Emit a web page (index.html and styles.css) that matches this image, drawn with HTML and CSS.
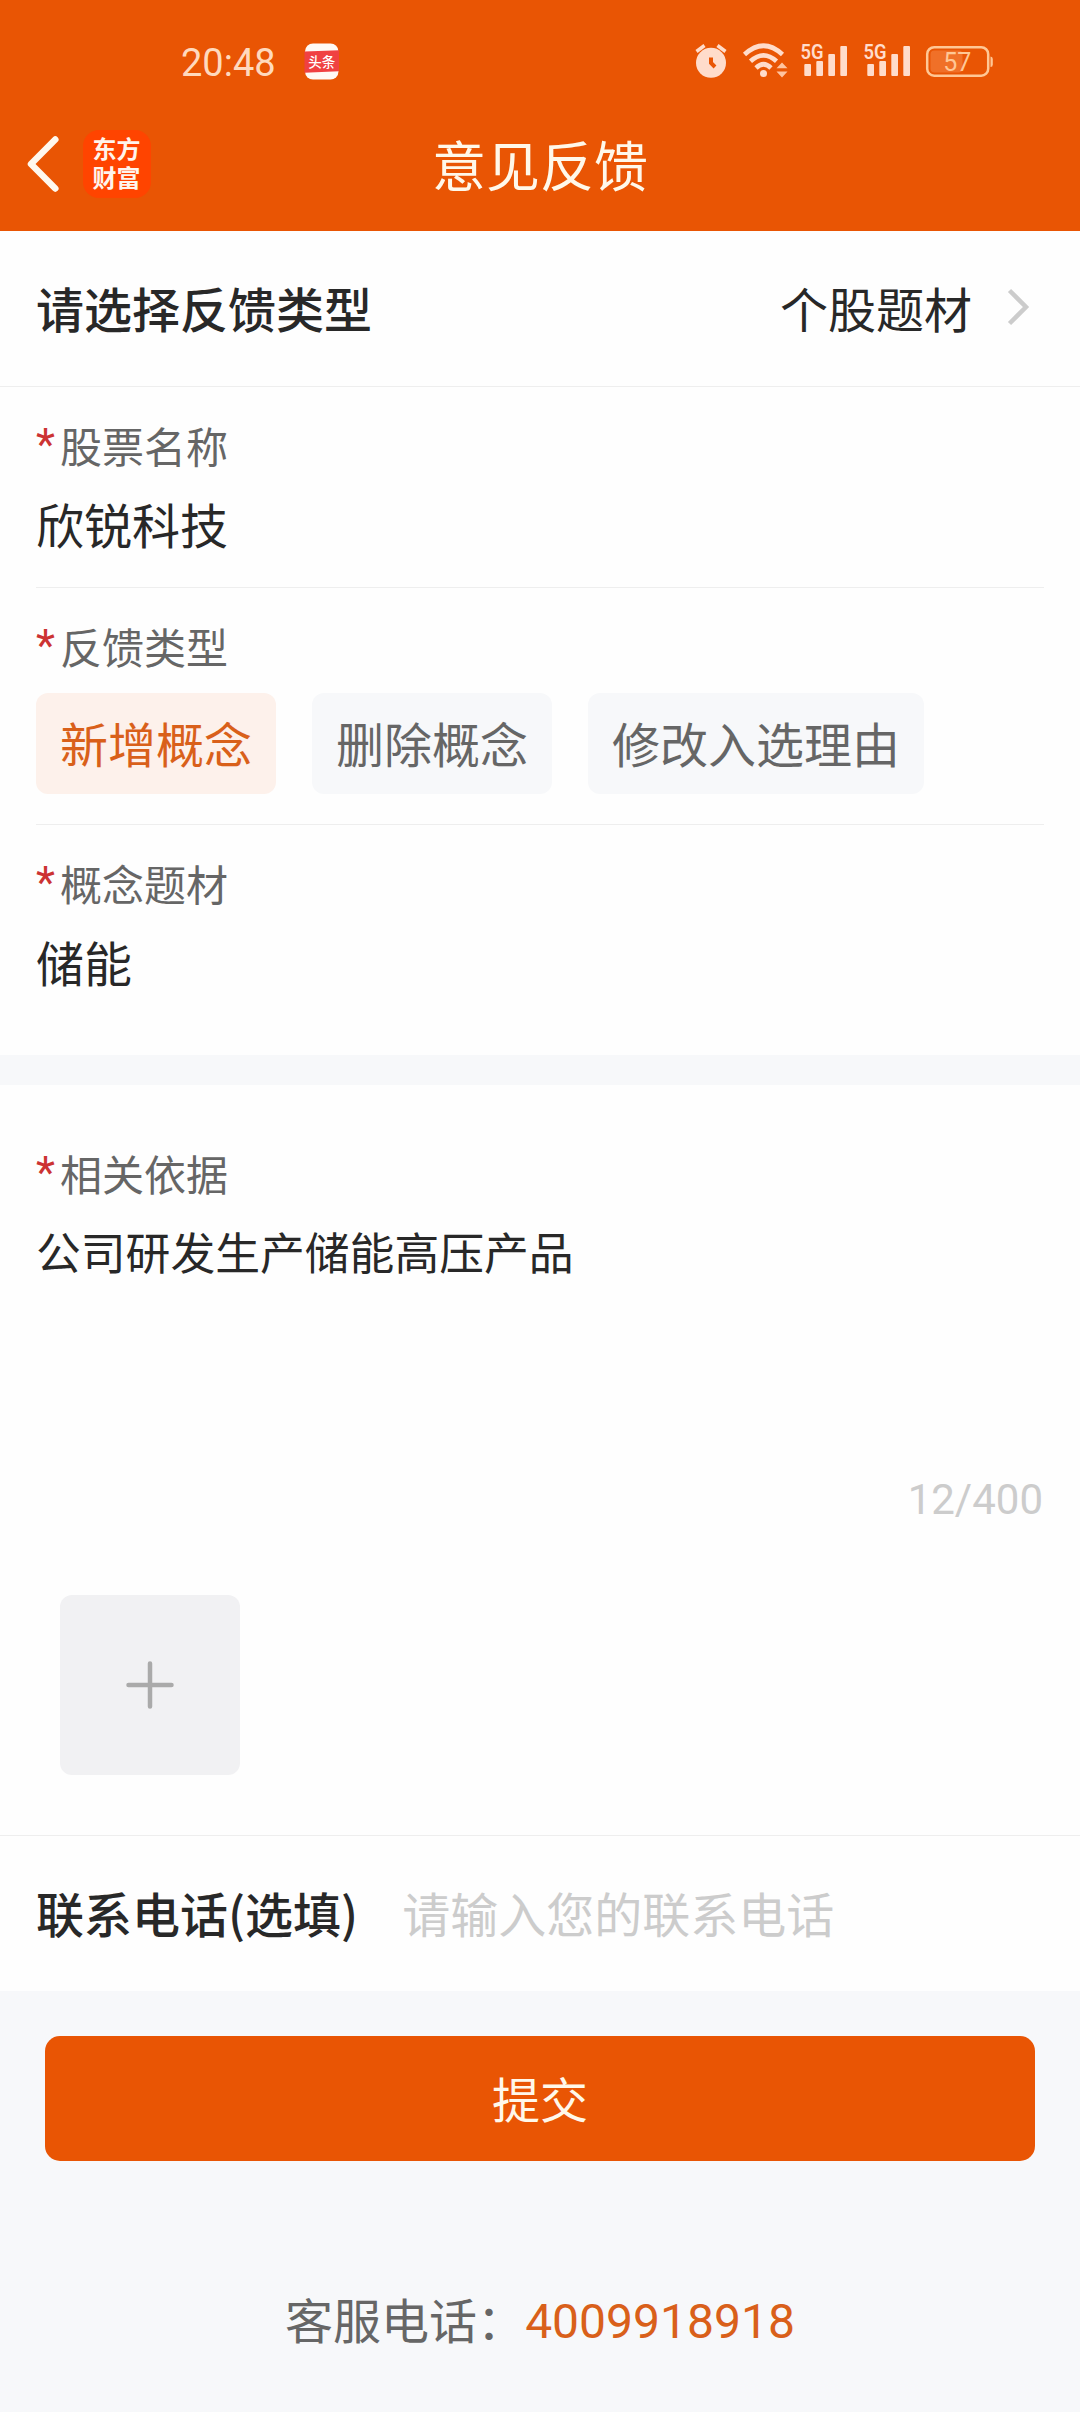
FILE: index.html
```html
<!DOCTYPE html>
<html lang="zh-CN">
<head>
<meta charset="utf-8">
<title>意见反馈</title>
<link rel="stylesheet" href="styles.css">
</head>
<body>
<div class="page">
  <header class="header">
    <div class="status">
      <div class="status-left">
        <span class="time">20:48</span>
        <svg class="news" width="36" height="37" viewBox="0 0 36 37">
          <rect x="1" y="0.5" width="33.5" height="36" rx="8" fill="#fffaf5"/>
          <path d="M0.5 8.5 35 7.3V28.2L0.5 29.8Z" fill="#f04142"/>
          <text x="17.7" y="23.600" text-anchor="middle" class="news-text">头条</text>
        </svg>
      </div>
      <svg class="status-icons" width="305" height="50" viewBox="692 32 305 50">
        <g fill="#ffdccb">
          <circle cx="711" cy="62.8" r="15"/>
          <path d="M696.500 51.500 704.500 45.500M725.500 51.500 717.500 45.500" stroke="#ffdccb" stroke-width="3.500"/>
          <path d="M711 57.5V63L715 67" fill="none" stroke="#e95504" stroke-width="4"/>
        </g>
        <g fill="none" stroke="#ffdccb" stroke-width="4.6">
          <path d="M744.5 54.5Q763.5 37 782.5 54.5"/>
          <path d="M750.5 61.3Q763.5 49.5 776.5 61.3"/>
          <path d="M756 68Q763.5 60.5 771 68"/>
        </g>
        <circle cx="763.5" cy="73.5" r="3.5" fill="#ffdccb"/>
        <path d="M776.5 68.3 782 62.5 787.5 68.3ZM776.5 71.5H787.5L782 77.5Z" fill="#ffc4a0"/>
        <g fill="#ffdccb">
          <text x="800.5" y="59" class="net" textLength="23" lengthAdjust="spacingAndGlyphs">5G</text>
          <rect x="804.3" y="64" width="6.7" height="12" rx="1"/>
          <rect x="816.3" y="61" width="6.7" height="15" rx="1"/>
          <rect x="828.3" y="54" width="6.7" height="22" rx="1"/>
          <rect x="840.3" y="46" width="6.7" height="30" rx="1"/>
        </g>
        <g fill="#ffdccb">
          <text x="863.5" y="59" class="net" textLength="23" lengthAdjust="spacingAndGlyphs">5G</text>
          <rect x="867.3" y="64" width="6.7" height="12" rx="1"/>
          <rect x="879.3" y="61" width="6.7" height="15" rx="1"/>
          <rect x="891.3" y="54" width="6.7" height="22" rx="1"/>
          <rect x="903.3" y="46" width="6.7" height="30" rx="1"/>
        </g>
        <rect x="930.5" y="50.500" width="32" height="22" rx="4" fill="#f07028"/>
        <rect x="927.2" y="47.2" width="61" height="28.5" rx="7" fill="none" stroke="#ffc795" stroke-width="2.5"/>
        <path d="M990.5 56.5Q992.8 56.5 992.8 59V64.5Q992.8 67 990.5 67Z" fill="#ffc795"/>
        <text x="957.3" y="70.8" text-anchor="middle" class="battery">57</text>
      </svg>
    </div>
    <nav class="nav">
      <div class="nav-left">
        <svg width="34" height="58" viewBox="0 0 34 58">
          <path d="M29.3 4.5 5 29 29.3 53.5" fill="none" stroke="#fff8ee" stroke-width="6.5" stroke-linecap="round" stroke-linejoin="round"/>
        </svg>
        <div class="logo"><span>东方</span><span>财富</span></div>
      </div>
      <h1 class="title">意见反馈</h1>
    </nav>
  </header>

  <div class="type-row">
    <span class="strong">请选择反馈类型</span>
    <span class="type-value">个股题材
      <svg width="24" height="40" viewBox="0 0 24 40">
        <path d="M2.5 3.5 19 20 2.5 36.5" fill="none" stroke="#ccc" stroke-width="4.5"/>
      </svg>
    </span>
  </div>

  <section class="fields">
    <div class="field">
      <div class="label"><i>*</i>股票名称</div>
      <div class="value">欣锐科技</div>
    </div>
    <div class="field field-chips">
      <div class="label"><i>*</i>反馈类型</div>
      <div class="chips">
        <span class="chip chip-on">新增概念</span>
        <span class="chip">删除概念</span>
        <span class="chip">修改入选理由</span>
      </div>
    </div>
    <div class="field field-last">
      <div class="label"><i>*</i>概念题材</div>
      <div class="value">储能</div>
    </div>
  </section>

  <section class="evidence">
    <div class="label"><i>*</i>相关依据</div>
    <div class="evidence-text">公司研发生产储能高压产品</div>
    <div class="counter">12/400</div>
    <div class="upload">
      <svg width="50" height="50" viewBox="0 0 50 50">
        <path d="M25 3.5V46.5M3.5 25H46.5" stroke="#aaa" stroke-width="4.5" stroke-linecap="round"/>
      </svg>
    </div>
  </section>

  <div class="contact">
    <span class="strong">联系电话(选填)</span>
    <span class="placeholder">请输入您的联系电话</span>
  </div>

  <footer class="footer">
    <div class="submit">提交</div>
    <div class="service"><span class="service-label">客服电话：</span><span class="phone">4009918918</span></div>
  </footer>
</div>
</body>
</html>
```
FILE: styles.css
```css
* { box-sizing: border-box; }

body {
  margin: 0;
  background: #f7f8fa;
  color: #282828;
  font-family: "Noto Sans CJK SC", sans-serif;
  font-size: 48px;
  line-height: 66px;
}

svg { display: block; flex: none; }

.page { width: 1080px; height: 2412px; overflow: hidden; display: flex; flex-direction: column; }

/* Header */
.header { height: 231px; flex: none; background: #e95504; }
.status { height: 95px; padding: 32px 83px 0 181px; display: flex; justify-content: space-between; align-items: flex-start; }
.status-left { padding-top: 11px; display: flex; align-items: flex-start; gap: 28px; }
.time { font-family: Roboto, sans-serif; font-size: 38px; line-height: 40px; width: 95px; color: #ffd9bd; }
.news-text { font-size: 13.5px; font-weight: 500; fill: #fff; }
.net { font-family: Roboto, sans-serif; font-size: 21px; font-weight: 600; }
.battery { font-family: Roboto, sans-serif; font-size: 25px; fill: #ffc795; }
.nav { height: 136px; padding: 2px 26px 0; display: grid; grid-template-columns: 1fr auto 1fr; align-items: center; }
.nav-left { display: flex; align-items: center; gap: 23px; }
.logo { width: 68px; height: 68px; border-radius: 16px; background: #ff4400; color: #fff4ec; display: flex; flex-direction: column; align-items: center; justify-content: center; font-size: 24px; font-weight: 700; line-height: 29px; padding: 0 1px 5px 0; }
.title { margin: 0; font-size: 54px; font-weight: 400; line-height: 72px; color: #fff8ea; }

/* Feedback type */
.type-row { height: 156px; flex: none; padding: 0 49px 3px 36px; background: #fefefe; border-bottom: 1px solid #eee; display: flex; align-items: center; justify-content: space-between; }
.strong { font-weight: 500; }
.type-value { display: flex; align-items: center; gap: 35px; }

/* Fields */
.fields { background: #fefefe; display: flex; flex-direction: column; flex: none; }
.field { margin: 0 36px; padding: 28px 0 31px; display: flex; flex-direction: column; gap: 15px; border-bottom: 1px solid #eee; }
.field-chips { gap: 17px; padding-bottom: 30px; }
.field-last { padding-bottom: 61px; border-bottom: 0; }
.label { display: flex; font-size: 42px; line-height: 60px; color: #666; }
.label i { width: 24px; font-family: Roboto, sans-serif; font-size: 44px; font-style: normal; color: #cc3333; }
.chips { display: flex; gap: 36px; }
.chip { height: 101px; padding: 0 24px; border-radius: 12px; background: #f7f8fa; color: #666; line-height: 99px; }
.chip-on { background: #fdf1eb; color: #d9601a; }

/* Evidence */
.evidence { height: 750px; flex: none; margin-top: 30px; padding: 58px 36px 0; background: #fefefe; display: flex; flex-direction: column; }
.evidence-text { height: 252px; margin-top: 15px; font-size: 44.8px; }
.counter { align-self: flex-end; margin-right: 1px; font-family: Roboto, sans-serif; font-size: 42px; line-height: 60px; color: #ccc; }
.upload { width: 180px; height: 180px; margin: 65px 0 0 24px; border-radius: 12px; background: #f1f1f3; display: flex; align-items: center; justify-content: center; }

/* Contact */
.contact { height: 156px; flex: none; padding: 0 36px 3px; background: #fefefe; border-top: 1px solid #eee; display: flex; align-items: center; gap: 44px; }
.placeholder { color: #ccc; }

/* Footer */
.footer { padding: 45px 45px 0; display: flex; flex-direction: column; }
.submit { height: 125px; border-radius: 15px; background: #e95504; color: #fff8ea; line-height: 123px; text-align: center; }
.service { margin-top: 124px; display: flex; justify-content: center; color: #666; }
.phone { padding-top: 4px; font-family: Roboto, sans-serif; color: #d9601a; }
```
